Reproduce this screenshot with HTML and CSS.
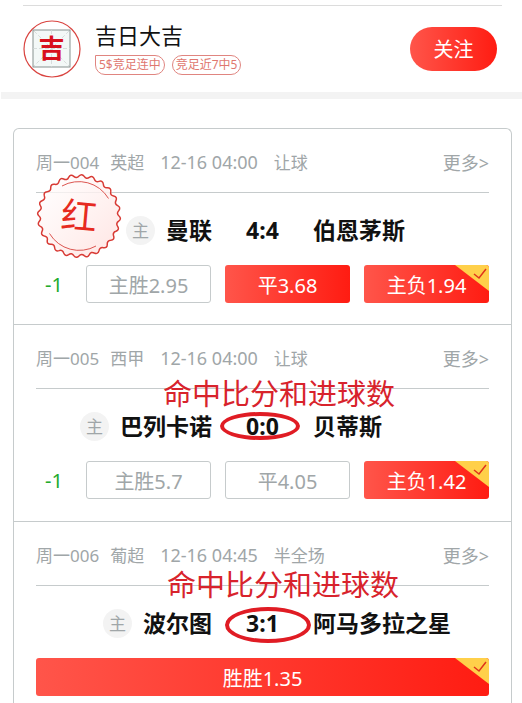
FILE: index.html
```html
<!DOCTYPE html>
<html lang="zh-CN">
<head>
    <meta charset="UTF-8">
    <meta name="viewport" content="width=device-width, initial-scale=1">
    <title>吉日大吉</title>
    <link rel="stylesheet" href="styles.css">
</head>
<body>
    <!-- shared shapes -->
    <svg class="defs" aria-hidden="true">
        <symbol id="corner" viewBox="0 0 34 26">
            <path d="M0 0H34V26Z" fill="#ffd04a"/>
            <path d="M19 9L24 13L31 4" fill="none" stroke="#e0341c" stroke-width="1.5"/>
        </symbol>
    </svg>

    <header class="profile">
        <svg class="avatar" viewBox="0 0 58 58" role="img" aria-label="吉">
            <circle cx="29" cy="29" r="28" fill="#fff" stroke="#d9433f" stroke-width="1.2"/>
            <rect x="10" y="10" width="37" height="37" fill="#f3f8f7" stroke="#879290"/>
            <path d="M11 11L46 46M46 11L11 46M28.5 10V47M10 28.5H47" stroke="#cfd6d4" stroke-width="0.8" stroke-dasharray="4 2"/>
            <text class="avatar-text" x="28.5" y="38" text-anchor="middle">吉</text>
        </svg>
        <div class="profile-info">
            <h1 class="name">吉日大吉</h1>
            <div class="tags">
                <span class="tag tag-square">5$竞足连中</span>
                <span class="tag">竞足近7中5</span>
            </div>
        </div>
        <button class="follow" type="button">关注</button>
    </header>

    <main class="card">
        <section class="match">
            <div class="meta">
                <span>周一004</span>
                <span class="league">英超</span>
                <span class="time">12-16 04:00</span>
                <span>让球</span>
                <a class="more" href="#">更多&gt;</a>
            </div>
            <div class="teams">
                <div class="home"><span class="badge">主</span>曼联</div>
                <div class="score">4:4</div>
                <div class="away">伯恩茅斯</div>
            </div>
            <div class="odds">
                <span class="handicap">-1</span>
                <button class="odd" type="button">主胜2.95</button>
                <button class="odd picked" type="button">平3.68</button>
                <button class="odd picked" type="button">主负1.94<svg class="corner"><use href="#corner"/></svg></button>
            </div>
            <svg class="seal" viewBox="-44 -44 88 88" role="img" aria-label="红">
                <defs>
                    <linearGradient id="sealFill" x1="0" y1="0" x2="1" y2="1">
                        <stop offset="0" stop-color="#fff" stop-opacity="0.7"/>
                        <stop offset="1" stop-color="#ffe3e1" stop-opacity="0.95"/>
                    </linearGradient>
                    <path id="wave" d="M40 0Q42.91 2.81 39.66 5.22Q36.49 7.26 38.64 10.35Q40.72 13.82 36.96 15.31Q33.36 16.45 34.64 20Q35.75 23.89 31.73 24.35Q27.97 24.53 28.28 28.28Q28.35 32.33 24.35 31.73Q20.67 30.93 20 34.64Q19.02 38.57 15.31 36.96Q11.96 35.23 10.35 38.64Q8.39 42.17 5.22 39.66Q2.43 37.12 0 40"/>
                </defs>
                <circle r="40" fill="url(#sealFill)"/>
                <g fill="none" stroke="#d83a34" stroke-width="1.5">
                    <use href="#wave"/>
                    <use href="#wave" transform="rotate(90)"/>
                    <use href="#wave" transform="rotate(180)"/>
                    <use href="#wave" transform="rotate(270)"/>
                </g>
                <g fill="none" stroke="#dc5550" stroke-width="1">
                    <path d="M-17 -30A34.5 34.5 0 0 1 29.5 -17.5"/>
                    <path d="M-29.5 17.5A34.5 34.5 0 0 0 17 30"/>
                </g>
                <text class="seal-text" y="13" text-anchor="middle" transform="rotate(5)">红</text>
            </svg>
        </section>

        <section class="match">
            <div class="meta">
                <span>周一005</span>
                <span class="league">西甲</span>
                <span class="time">12-16 04:00</span>
                <span>让球</span>
                <a class="more" href="#">更多&gt;</a>
            </div>
            <div class="teams">
                <div class="home"><span class="badge">主</span>巴列卡诺</div>
                <div class="score">0:0<span class="ring"></span></div>
                <div class="away">贝蒂斯</div>
            </div>
            <div class="odds">
                <span class="handicap">-1</span>
                <button class="odd" type="button">主胜5.7</button>
                <button class="odd" type="button">平4.05</button>
                <button class="odd picked" type="button">主负1.42<svg class="corner"><use href="#corner"/></svg></button>
            </div>
            <p class="note">命中比分和进球数</p>
        </section>

        <section class="match">
            <div class="meta">
                <span>周一006</span>
                <span class="league">葡超</span>
                <span class="time">12-16 04:45</span>
                <span>半全场</span>
                <a class="more" href="#">更多&gt;</a>
            </div>
            <div class="teams">
                <div class="home"><span class="badge">主</span>波尔图</div>
                <div class="score">3:1<span class="ring ring-large"></span></div>
                <div class="away">阿马多拉之星</div>
            </div>
            <div class="odds odds-single">
                <button class="odd picked" type="button">胜胜1.35<svg class="corner"><use href="#corner"/></svg></button>
            </div>
            <p class="note note-high">命中比分和进球数</p>
        </section>
    </main>
</body>
</html>
```

FILE: styles.css
```css
* {
    box-sizing: border-box;
}
body {
    margin: 0;
    padding-top: 5px;
    background: #fff;
    color: #111;
    font-family: "Noto Sans", "Noto Sans CJK SC", sans-serif;
}
button {
    font-family: inherit;
    cursor: pointer;
}
.defs {
    display: none;
}

/* profile */
.profile {
    display: flex;
    align-items: center;
    height: 86px;
    margin: 0 20px 1px 23px;
    padding-right: 5px;
    border-top: 1px solid #dcdcdc;
}
.avatar {
    width: 58px;
    height: 58px;
    margin-right: 14px;
}
.avatar-text {
    font-family: KaiTi, "Noto Sans CJK SC", sans-serif;
    font-size: 26px;
    font-weight: bold;
    fill: #d8101c;
}
.profile-info {
    flex: 1;
}
.name {
    margin: 0 0 7px;
    font-size: 22px;
    font-weight: normal;
    line-height: 26px;
}
.tags {
    display: flex;
    gap: 7px;
}
.tag {
    height: 20px;
    padding: 0 3px;
    border: 1px solid #e08580;
    border-radius: 10px;
    color: #e0776f;
    font-size: 12px;
    line-height: 18px;
    white-space: nowrap;
}
.tag-square {
    border-top-left-radius: 0;
}
.follow {
    width: 87px;
    height: 44px;
    padding: 0;
    border: none;
    border-radius: 22px;
    background: linear-gradient(90deg, #ff554a, #ff1c12);
    color: #fff;
    font-size: 20px;
}

/* match list */
.card {
    padding: 36px 10px 0 13px;
    position: relative;
}
.card::before {
    content: "";
    position: absolute;
    top: 0;
    left: 1px;
    right: 0;
    height: 7px;
    background: #f3f3f3;
}
.match {
    position: relative;
    padding: 0 22px 22px;
    border: 1px solid #c6cbcc;
    border-bottom: none;
}
.match:first-child {
    padding-bottom: 21px;
    border-radius: 6px 6px 0 0;
}
.match:last-child {
    padding-bottom: 7px;
}
.meta {
    display: flex;
    align-items: center;
    height: 64px;
    padding-top: 2px;
    border-bottom: 1px solid #c6cbcc;
    color: #a0a6a8;
    font-size: 17px;
    white-space: nowrap;
}
.league {
    margin: 0 16px 0 11px;
}
.time {
    margin-right: 16px;
    font-size: 18px;
}
.more {
    margin-left: auto;
    color: inherit;
    font-size: 18px;
    text-decoration: none;
}
.teams {
    display: grid;
    grid-template-columns: 1fr 101px 1fr;
    align-items: center;
    height: 72px;
    padding-top: 2px;
    font-size: 23px;
    font-weight: bold;
    line-height: 32px;
    white-space: nowrap;
}
.home {
    display: flex;
    align-items: center;
    justify-content: flex-end;
}
.badge {
    width: 29px;
    height: 29px;
    margin-right: 11px;
    border-radius: 50%;
    background: #f3f3f3;
    color: #a0a6a8;
    font-size: 17px;
    font-weight: normal;
    line-height: 29px;
    text-align: center;
}
.score {
    position: relative;
    text-align: center;
}
.odds {
    display: grid;
    grid-template-columns: 36px 1fr 1fr 1fr;
    gap: 14px;
    align-items: center;
}
.odds-single {
    grid-template-columns: 1fr;
}
.handicap {
    color: #22ab2c;
    font-size: 20px;
    text-align: center;
}
.odd {
    position: relative;
    height: 38px;
    padding: 4px 0 0;
    border: 1px solid #c6cbcc;
    border-radius: 3px;
    background: #fff;
    color: #a0a6a8;
    font-size: 20px;
    line-height: 32px;
    overflow: hidden;
}
.picked {
    border: none;
    background: linear-gradient(90deg, #ff554a, #ff1c12);
    color: #fff;
}
.corner {
    position: absolute;
    top: 0;
    right: 0;
    width: 34px;
    height: 26px;
}

/* marks drawn over the rows */
.seal {
    position: absolute;
    top: 43px;
    left: 21px;
    width: 88px;
    height: 88px;
}
.seal-text {
    font-family: SimSun, "Noto Sans CJK SC", sans-serif;
    font-size: 36px;
    fill: #e62a20;
}
.ring {
    position: absolute;
    top: 2px;
    left: 8px;
    width: 80px;
    height: 28px;
    border: 4px solid #e01c24;
    border-radius: 50%;
}
.ring-large {
    top: 0;
    left: 13px;
    width: 86px;
    height: 36px;
}
.note {
    position: absolute;
    top: 52px;
    left: 149px;
    margin: 0;
    color: #d8232c;
    font-family: KaiTi, "Noto Sans CJK SC", sans-serif;
    font-size: 29px;
    line-height: 30px;
    white-space: nowrap;
}
.note-high {
    top: 46px;
    left: 153px;
}
```
